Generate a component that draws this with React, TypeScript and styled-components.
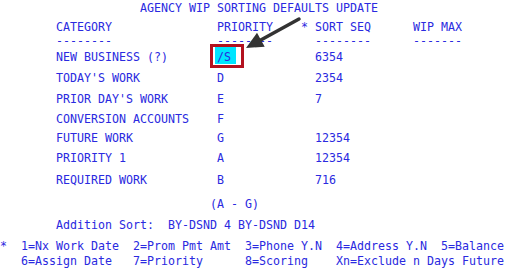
import React from "react";
import styled, { createGlobalStyle } from "styled-components";

const GlobalStyle = createGlobalStyle`
  html, body { margin: 0; padding: 0; background: #ffffff; }
  body { width: 512px; height: 270px; overflow: hidden; }
`;

const Screen = styled.div`
  position: relative;
  width: 512px;
  height: 270px;
  background: #ffffff;
  font-family: "DejaVu Sans Mono", "Liberation Mono", monospace;
  font-size: 11.63px;
  line-height: 14px;
  color: #2a2ae0;
  white-space: pre;
`;

const Line = styled.div<{ $top: number; $indent?: number }>`
  height: 14px;
  margin-top: ${(p) => p.$top}px;
  padding-left: ${(p) => p.$indent ?? 0}px;
`;

const TableRow = styled.div<{ $top: number }>`
  display: grid;
  grid-template-columns: 161px 84px 14px 98px 1fr;
  height: 14px;
  margin-top: ${(p) => p.$top}px;
  padding-left: 56px;
`;

const Cell = styled.span``;

const Field = styled.span`
  background: #00e5ff;
  margin-left: -2px;
  padding: 2.75px 5px 0.75px 2px;
`;

const Callout = styled.div`
  position: absolute;
  left: 210px;
  top: 43px;
  width: 34px;
  height: 24px;
  box-sizing: border-box;
  border: 3px solid #b3121f;
`;

const ArrowSvg = styled.svg`
  position: absolute;
  left: 0;
  top: 0;
  pointer-events: none;
`;

type Row = { cat: string; pri: React.ReactNode; seq: string; top: number };

const rows: Row[] = [
  { cat: "NEW BUSINESS (?)", pri: <Field>/S</Field>, seq: "6354", top: 2 },
  { cat: "TODAY'S WORK", pri: "D", seq: "2354", top: 7 },
  { cat: "PRIOR DAY'S WORK", pri: "E", seq: "7", top: 7 },
  { cat: "CONVERSION ACCOUNTS", pri: "F", seq: "", top: 6 },
  { cat: "FUTURE WORK", pri: "G", seq: "12354", top: 5 },
  { cat: "PRIORITY 1", pri: "A", seq: "12354", top: 6 },
  { cat: "REQUIRED WORK", pri: "B", seq: "716", top: 8 },
];

export default function App() {
  return (
    <>
      <GlobalStyle />
      <Screen>
        <Line $top={0.5} $indent={140}>AGENCY WIP SORTING DEFAULTS UPDATE</Line>
        <TableRow $top={5}>
          <Cell>CATEGORY</Cell>
          <Cell>PRIORITY</Cell>
          <Cell>*</Cell>
          <Cell>SORT SEQ</Cell>
          <Cell>WIP MAX</Cell>
        </TableRow>
        <TableRow $top={0}>
          <Cell>--------</Cell>
          <Cell>--------</Cell>
          <Cell></Cell>
          <Cell>--------</Cell>
          <Cell>-------</Cell>
        </TableRow>
        {rows.map((r) => (
          <TableRow key={r.cat} $top={r.top}>
            <Cell>{r.cat}</Cell>
            <Cell>{r.pri}</Cell>
            <Cell></Cell>
            <Cell>{r.seq}</Cell>
            <Cell></Cell>
          </TableRow>
        ))}
        <Line $top={10} $indent={210}>(A - G)</Line>
        <Line $top={7} $indent={56}>Addition Sort:  BY-DSND 4 BY-DSND D14</Line>
        <Line $top={7.5}>*  1=Nx Work Date  2=Prom Pmt Amt  3=Phone Y.N  4=Address Y.N  5=Balance</Line>
        <Line $top={1}>   6=Assign Date   7=Priority      8=Scoring    Xn=Exclude n Days Future</Line>
        <Callout />
        <ArrowSvg width={512} height={270} viewBox="0 0 512 270">
          <line x1={299} y1={18} x2={259} y2={40} stroke="#333333" strokeWidth={3.5} strokeLinecap="round" />
          <polygon points="246,47 257,31.8 264.7,45.8" fill="#333333" />
        </ArrowSvg>
      </Screen>
    </>
  );
}
